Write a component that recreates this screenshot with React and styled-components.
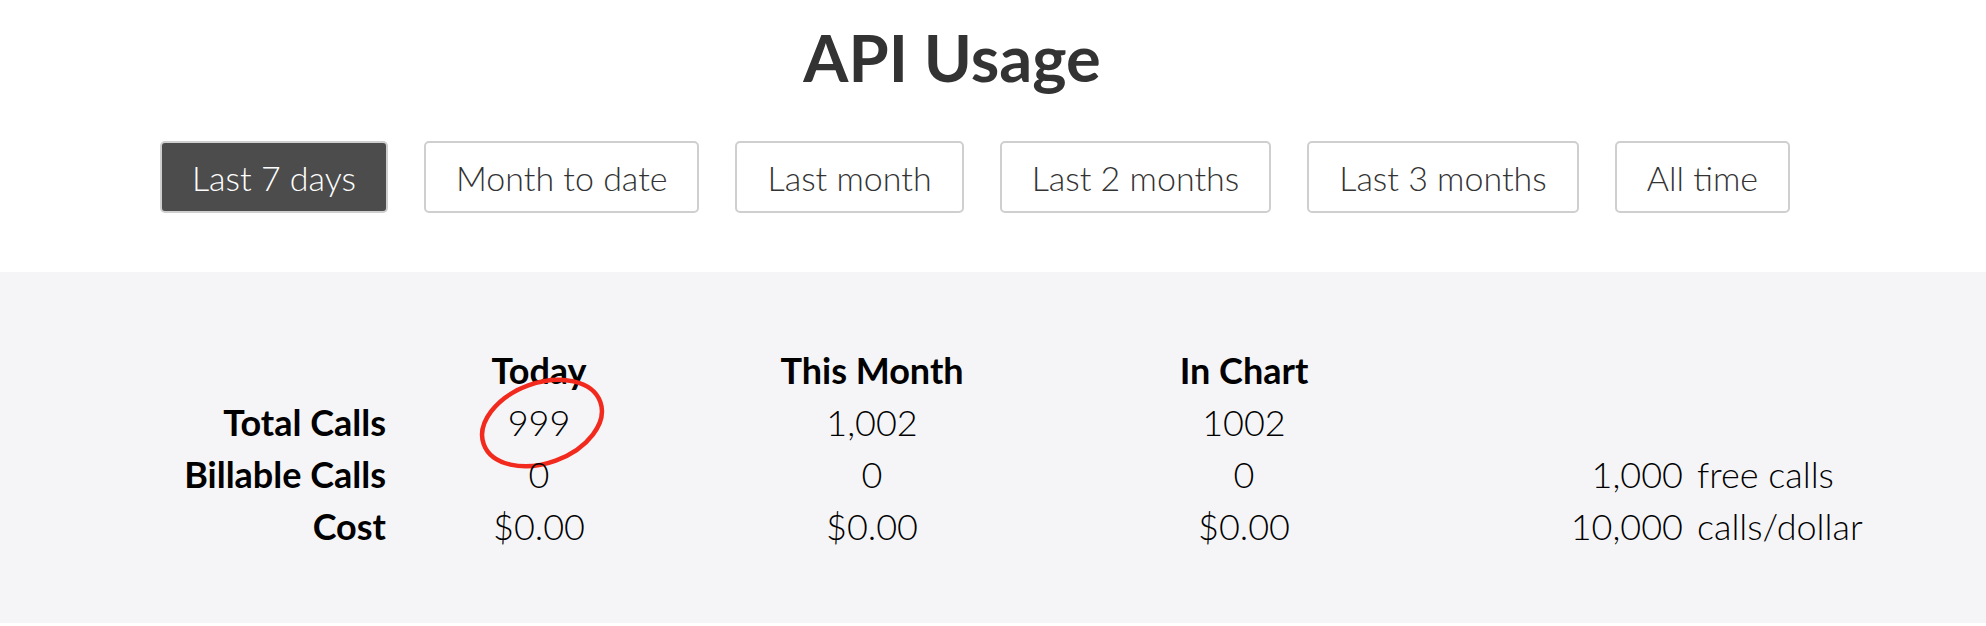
import styled, { createGlobalStyle } from "styled-components";

const GlobalStyle = createGlobalStyle`
  html, body {
    margin: 0;
    padding: 0;
    background: #fff;
  }
  body {
    font-family: Lato, "Open Sans", sans-serif;
    color: #000;
  }
`;

const Page = styled.div`
  width: 1986px;
  height: 626px;
  overflow: hidden;
  background: #fff;
`;

const Header = styled.header`
  display: flex;
  flex-direction: column;
  align-items: center;
  padding-top: 18px;
  height: 272px;
  box-sizing: border-box;
`;

const Title = styled.h1`
  margin: 0;
  padding-right: 82px;
  font-size: 65px;
  line-height: 1.2;
  font-weight: 700;
  color: #333;
`;

const RangeBar = styled.div`
  display: flex;
  justify-content: center;
  gap: 36px;
  padding-right: 36px;
  margin-top: 45px;
`;

const RangeButton = styled.button`
  height: 72px;
  padding: 0 30px;
  border: 2px solid #cfcfcf;
  border-radius: 5px;
  background: ${(p) => (p.$active ? "#4c4c4c" : "#fff")};
  color: ${(p) => (p.$active ? "#fff" : "#333")};
  font-family: Lato, sans-serif;
  font-weight: 300;
  font-size: 34px;
  cursor: pointer;
`;

const Stats = styled.section`
  background: #f5f5f7;
  height: 351px;
  box-sizing: border-box;
  padding: 72px 0 0 100px;
`;

const Grid = styled.div`
  display: grid;
  grid-template-columns: 286px 306px 360px 384px 247px auto;
  font-size: 36px;
  line-height: 52px;
  color: #000;
`;

const Label = styled.div`
  font-weight: 700;
  text-align: right;
`;

const ColHead = styled.div`
  font-weight: 700;
  text-align: center;
`;

const Value = styled.div`
  position: relative;
  font-weight: 300;
  text-align: center;
`;

const Rate = styled.div`
  font-weight: 300;
  text-align: right;
`;

const RateUnit = styled.div`
  font-weight: 300;
  padding-left: 14px;
`;

const Circle = styled.svg`
  position: absolute;
  left: 86px;
  top: -28px;
  width: 140px;
  height: 110px;
  pointer-events: none;
  overflow: visible;
`;

const ranges = [
  "Last 7 days",
  "Month to date",
  "Last month",
  "Last 2 months",
  "Last 3 months",
  "All time",
];

const rows = [
  { label: "Total Calls", today: "999", month: "1,002", chart: "1002", rate: "", unit: "" },
  { label: "Billable Calls", today: "0", month: "0", chart: "0", rate: "1,000", unit: "free calls" },
  { label: "Cost", today: "$0.00", month: "$0.00", chart: "$0.00", rate: "10,000", unit: "calls/dollar" },
];

const App = () => {
  return (
    <Page>
      <GlobalStyle />
      <Header>
        <Title>API Usage</Title>
        <RangeBar>
          {ranges.map((r, i) => (
            <RangeButton key={r} $active={i === 0}>
              {r}
            </RangeButton>
          ))}
        </RangeBar>
      </Header>
      <Stats>
        <Grid>
          <div />
          <ColHead>Today</ColHead>
          <ColHead>This Month</ColHead>
          <ColHead>In Chart</ColHead>
          <div />
          <div />
          {rows.map((row, i) => (
            <>
              <Label key={row.label}>{row.label}</Label>
              <Value>
                {row.today}
                {i === 0 && (
                  <Circle viewBox="0 0 140 110">
                    <ellipse
                      cx="70"
                      cy="55"
                      rx="62"
                      ry="40"
                      transform="rotate(-20 70 55)"
                      fill="none"
                      stroke="#f2291d"
                      strokeWidth="4.5"
                    />
                  </Circle>
                )}
              </Value>
              <Value>{row.month}</Value>
              <Value>{row.chart}</Value>
              <Rate>{row.rate}</Rate>
              <RateUnit>{row.unit}</RateUnit>
            </>
          ))}
        </Grid>
      </Stats>
    </Page>
  );
};

export default App;
